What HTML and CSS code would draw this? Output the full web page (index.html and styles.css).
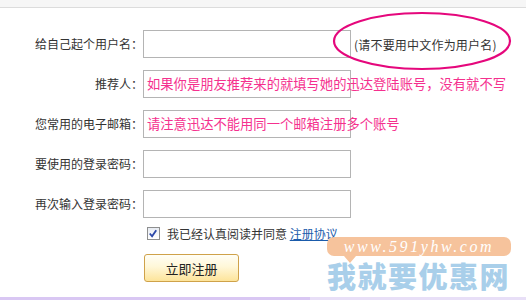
FILE: index.html
```html
<!DOCTYPE html>
<html lang="zh-CN">
<head>
<meta charset="utf-8">
<title>注册</title>
<link rel="stylesheet" href="styles.css">
</head>
<body>
<div class="page">
  <div class="topbar"></div>
  <div class="form">
    <div class="row">
      <div class="label">给自己起个用户名：</div>
      <div class="field"></div>
      <div class="hint">(请不要用中文作为用户名)</div>
    </div>
    <div class="row">
      <div class="label">推荐人：</div>
      <div class="field"><span class="pink">如果你是朋友推荐来的就填写她的迅达登陆账号，没有就不写</span></div>
    </div>
    <div class="row">
      <div class="label">您常用的电子邮箱：</div>
      <div class="field"><span class="pink">请注意迅达不能用同一个邮箱注册多个账号</span></div>
    </div>
    <div class="row">
      <div class="label">要使用的登录密码：</div>
      <div class="field"></div>
    </div>
    <div class="row">
      <div class="label">再次输入登录密码：</div>
      <div class="field"></div>
    </div>
    <div class="agree">
      <span class="check">
        <svg width="13" height="13" viewBox="0 0 13 13"><path d="M3 6.5 L5.5 9.5 L10 3" fill="none" stroke="#2b47a8" stroke-width="2"/></svg>
      </span>
      <span>我已经认真阅读并同意 <a class="link" href="#">注册协议</a></span>
    </div>
    <div class="btnrow">
      <div class="btn">立即注册</div>
    </div>
  </div>
  <div class="band"></div>

  <svg class="ellipse" width="182" height="62" viewBox="0 0 182 62"><ellipse cx="90" cy="30" rx="88" ry="28" fill="none" stroke="#e5077c" stroke-width="2.2"/></svg>

  <div class="watermark">
    <div class="bubble">www.591yhw.com</div>
    <div class="brand">我就要优惠网</div>
  </div>
</div>
</body>
</html>
```
FILE: styles.css
```css
html, body {
  margin: 0;
  padding: 0;
  background: #fff;
}
body {
  font-family: "Noto Sans CJK SC", "Liberation Sans", sans-serif;
  font-size: 12px;
  color: #333;
}
.page {
  position: relative;
  width: 526px;
  height: 300px;
  overflow: hidden;
}
.topbar {
  height: 7px;
  background: #f6f6f6;
  border-bottom: 1px solid #dcdcdc;
}
.form {
  padding-top: 22px;
}
.row {
  display: flex;
  align-items: center;
  height: 28px;
  margin-bottom: 12px;
}
.label {
  width: 143px;
  text-align: right;
  line-height: 14px;
}
.field {
  width: 203px;
  height: 26px;
  border: 1px solid #b4b4b4;
  padding-left: 3px;
  display: flex;
  align-items: center;
  white-space: nowrap;
  overflow: visible;
}
.pink {
  color: #f5308e;
  font-size: 13.3px;
  line-height: 16px;
}
.hint {
  margin-left: 3px;
  color: #333;
  letter-spacing: 0.2px;
}
.agree {
  display: flex;
  align-items: center;
  margin-top: -4px;
  padding-left: 147px;
  height: 15px;
}
.check {
  width: 11px;
  height: 11px;
  border: 1px solid #8e8f8f;
  background: linear-gradient(#e8ecf3, #ffffff);
  display: flex;
  margin-right: 7px;
}
.check svg {
  margin: -1px 0 0 -1px;
}
.link {
  color: #1a5bab;
  text-decoration: underline;
}
.btnrow {
  padding-left: 144px;
  margin-top: 13px;
}
.btn {
  width: 93px;
  height: 26px;
  border: 1px solid #cfa24a;
  border-radius: 3px;
  background: linear-gradient(#fffef6, #fff7d8 45%, #fde49a);
  display: flex;
  align-items: center;
  justify-content: center;
  font-size: 13px;
  color: #222;
}
.band {
  position: absolute;
  left: 0;
  bottom: 0;
  width: 526px;
  height: 3px;
  background: linear-gradient(to right, #d9c7f3 0, #d9c7f3 310px, #e8dff7 310px);
}
.ellipse {
  position: absolute;
  left: 332px;
  top: 11px;
}
.watermark {
  position: absolute;
  left: 327px;
  top: 237px;
  width: 184px;
}
.bubble {
  position: relative;
  height: 19px;
  border-radius: 7px;
  background: #f6c39c;
  color: #fff;
  font-family: "Liberation Serif", serif;
  font-style: italic;
  font-size: 16px;
  letter-spacing: 2.6px;
  line-height: 19px;
  text-align: center;
}
.bubble::after {
  content: "";
  position: absolute;
  left: 17px;
  top: 19px;
  border-left: 6px solid transparent;
  border-right: 6px solid transparent;
  border-top: 7px solid #f6c39c;
}
.brand {
  margin-top: 5px;
  color: #a9cfea;
  font-size: 29px;
  font-weight: 900;
  letter-spacing: 1.5px;
  line-height: 28px;
  white-space: nowrap;
}
```
